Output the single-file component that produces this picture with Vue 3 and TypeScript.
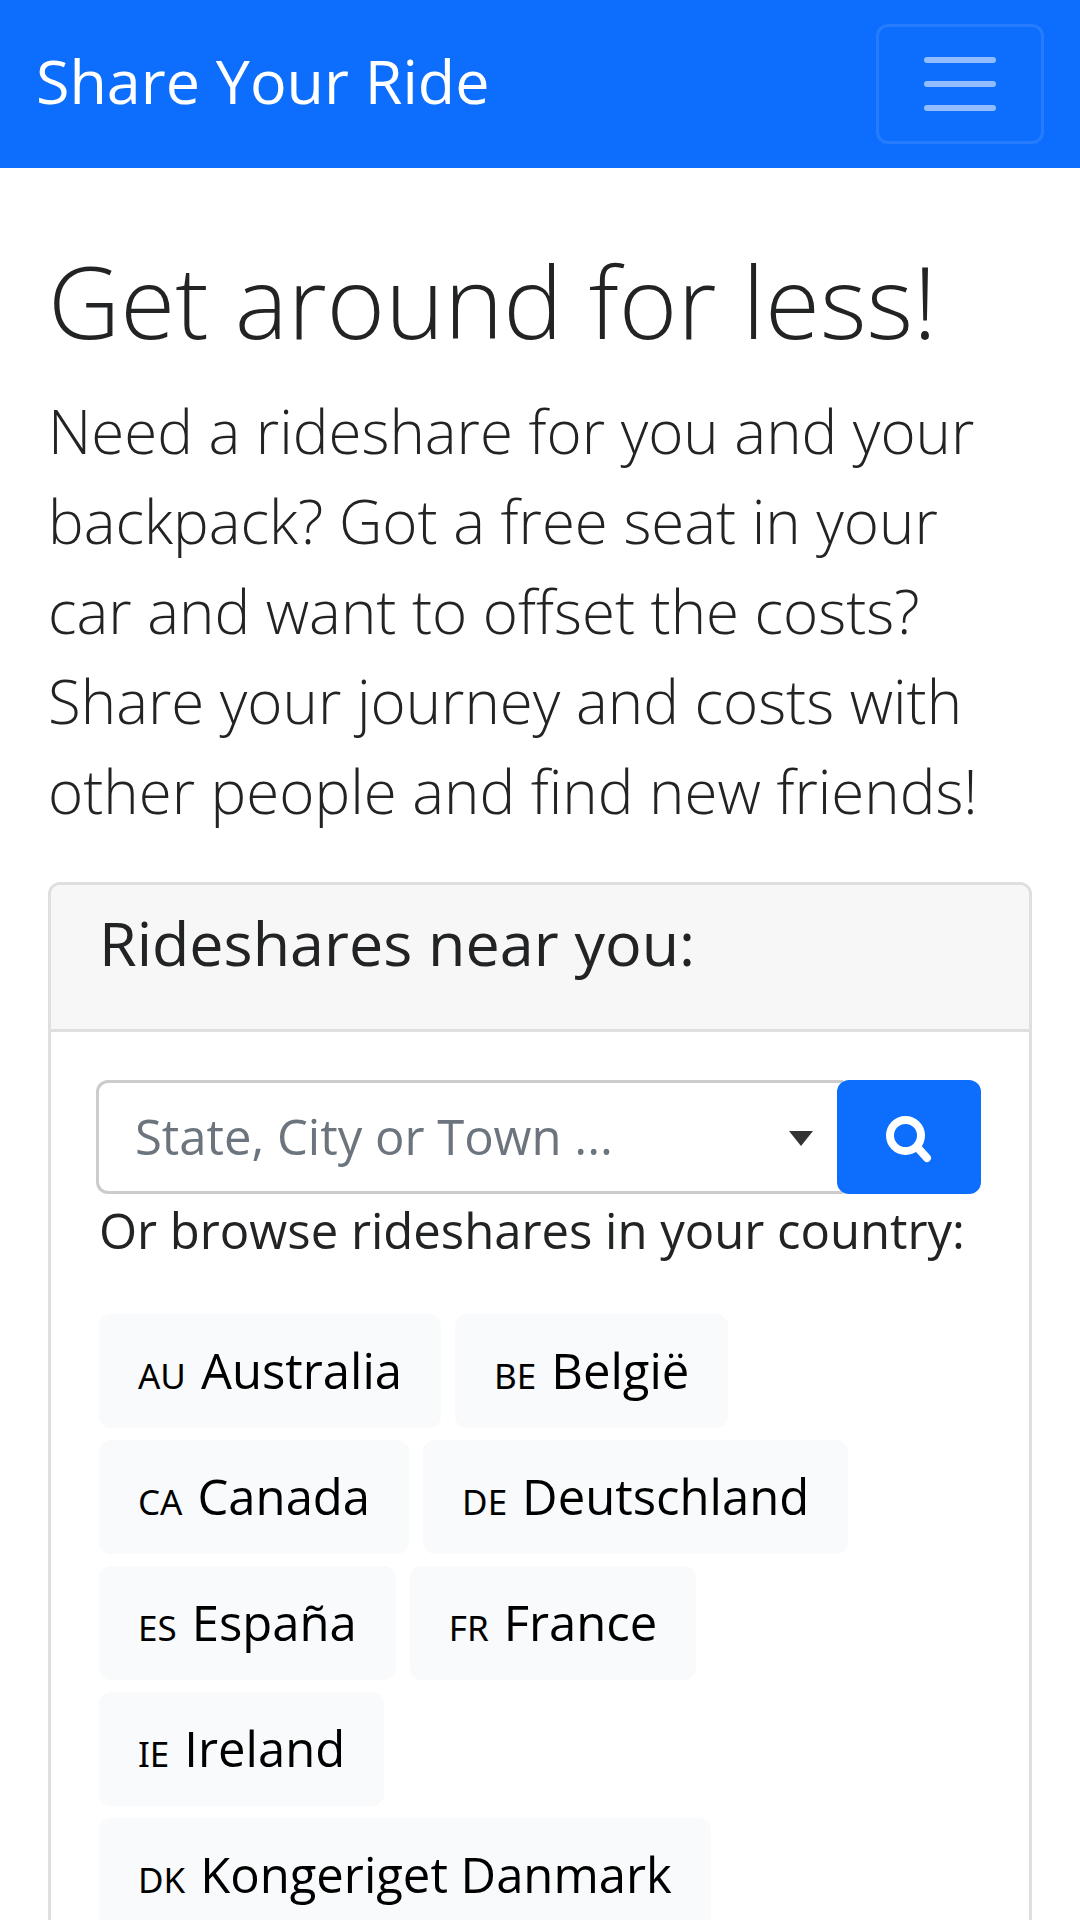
<script setup lang="ts">
import { ref } from 'vue'

interface Country {
  code: string
  name: string
}

const countries: Country[] = [
  { code: 'AU', name: 'Australia' },
  { code: 'BE', name: 'België' },
  { code: 'CA', name: 'Canada' },
  { code: 'DE', name: 'Deutschland' },
  { code: 'ES', name: 'España' },
  { code: 'FR', name: 'France' },
  { code: 'IE', name: 'Ireland' },
  { code: 'DK', name: 'Kongeriget Danmark' },
]

const place = ref('')
</script>

<template>
  <div class="page">
    <header class="navbar">
      <a class="brand" href="#">Share Your Ride</a>
      <button class="toggler" type="button" aria-label="Toggle navigation">
        <svg class="toggler-icon" viewBox="0 0 30 30" aria-hidden="true">
          <path d="M4 7h22M4 15h22M4 23h22" />
        </svg>
      </button>
    </header>

    <main class="content">
      <h1 class="title">Get around for less!</h1>
      <p class="lead">
        Need a rideshare for you and your backpack? Got a free seat in your car and want to offset
        the costs? Share your journey and costs with other people and find new friends!
      </p>

      <section class="card">
        <div class="card-header">
          <h2 class="card-title">Rideshares near you:</h2>
        </div>
        <div class="card-body">
          <form class="search" @submit.prevent>
            <div class="select-box">
              <select v-model="place" class="select" aria-label="State, City or Town">
                <option value="">State, City or Town ...</option>
              </select>
              <svg class="caret" viewBox="0 0 24 15" aria-hidden="true">
                <path d="M0 0h24L12 15z" />
              </svg>
            </div>
            <button class="search-button" type="submit" aria-label="Search">
              <svg class="search-icon" viewBox="0 0 48 48" aria-hidden="true">
                <circle cx="20.5" cy="22.5" r="15.5" />
                <path d="M32 34l10 11" />
              </svg>
            </button>
          </form>
          <p class="browse">Or browse rideshares in your country:</p>
          <nav class="countries" aria-label="Countries">
            <a v-for="c in countries" :key="c.code" class="country" href="#">
              <span class="code">{{ c.code }}</span>
              <span>{{ c.name }}</span>
            </a>
          </nav>
        </div>
      </section>
    </main>
  </div>
</template>

<style>
body {
  margin: 0;
  background: #fff;
}
</style>

<style scoped>
.page {
  font-family: "Open Sans", "Noto Sans", sans-serif;
  font-size: 49px;
  line-height: 72px;
  color: #212325;
}

.navbar {
  display: flex;
  align-items: center;
  justify-content: space-between;
  padding: 24px 36px;
  background: #0d6efd;
}

.brand {
  padding-bottom: 6px;
  color: #fff;
  font-size: 61px;
  line-height: 90px;
  text-decoration: none;
}

.toggler {
  box-sizing: border-box;
  display: flex;
  padding: 12px 36px;
  border: 3px solid rgba(255, 255, 255, 0.1);
  border-radius: 12px;
  background: transparent;
}

.toggler-icon {
  width: 90px;
  height: 90px;
  fill: none;
  stroke: rgba(255, 255, 255, 0.55);
  stroke-width: 2;
  stroke-linecap: round;
}

.content {
  padding: 66px 48px 60px;
}

.title {
  margin: 0 0 20px;
  font-size: 100px;
  font-weight: 300;
  line-height: 132px;
}

.lead {
  margin: 0 0 46px;
  font-size: 60px;
  font-weight: 300;
  line-height: 90px;
}

.card {
  border: 3px solid #dfdfdf;
  border-radius: 12px;
}

.card-header {
  padding: 22px 48px 50px;
  border-bottom: 3px solid #dfdfdf;
  border-radius: 9px 9px 0 0;
  background: #f7f7f7;
}

.card-title {
  margin: 0;
  font-size: 61px;
  font-weight: 400;
  line-height: 72px;
}

.card-body {
  padding: 48px;
}

.search {
  display: flex;
  margin-left: -3px;
}

.select-box {
  position: relative;
  flex: 1;
  min-width: 0;
  margin-right: -6px;
}

.select {
  box-sizing: border-box;
  display: block;
  width: 100%;
  height: 114px;
  margin: 0;
  padding: 0 96px 2px 36px;
  border: 3px solid #ccc;
  border-right: 0;
  border-radius: 12px 0 0 12px;
  background: #fff;
  color: #6c757d;
  font: inherit;
  appearance: none;
}

.caret {
  position: absolute;
  top: 51px;
  right: 30px;
  width: 24px;
  height: 15px;
  fill: #333;
  pointer-events: none;
}

.search-button {
  position: relative;
  display: flex;
  align-items: center;
  justify-content: center;
  width: 144px;
  height: 114px;
  padding: 0;
  border: 0;
  border-radius: 12px;
  background: #0d6efd;
}

.search-icon {
  width: 48px;
  height: 48px;
  overflow: visible;
  fill: none;
  stroke: #fff;
  stroke-width: 8;
  stroke-linecap: round;
}

.browse {
  margin: 0 0 48px;
}

.countries {
  display: flex;
  flex-wrap: wrap;
  gap: 12px 14px;
}

.country {
  display: flex;
  align-items: baseline;
  gap: 15px;
  padding: 20px 39px 22px;
  border-radius: 12px;
  background: #f9fafb;
  color: #000;
  text-decoration: none;
}

.code {
  font-family: "Noto Sans", sans-serif;
  font-size: 35px;
  line-height: 36px;
}
</style>
